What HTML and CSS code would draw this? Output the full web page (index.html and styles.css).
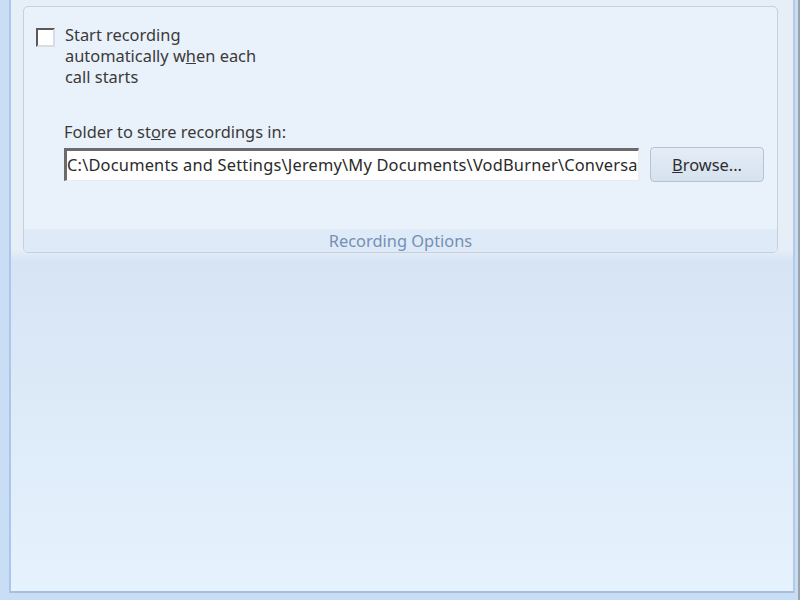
FILE: index.html
```html
<!DOCTYPE html>
<html lang="en">
<head>
  <meta charset="UTF-8" />
  <title>Recording Options</title>
  <link rel="stylesheet" href="styles.css">
</head>
<body>
  <div class="window">
    <div class="panel">
      <div class="group">
        <div class="group-body">
          <label class="check-row">
            <span class="checkbox"></span>
            <span class="check-text">Start recording<br>automatically w<u>h</u>en each<br>call starts</span>
          </label>
          <div class="folder">
            <div class="folder-label">Folder to st<u>o</u>re recordings in:</div>
            <div class="folder-row">
              <div class="path-box">C:\Documents and Settings\Jeremy\My Documents\VodBurner\Conversa</div>
              <button class="browse"><u>B</u>rowse...</button>
            </div>
          </div>
        </div>
        <div class="group-footer">Recording Options</div>
      </div>
    </div>
  </div>
</body>
</html>
```

FILE: styles.css
```css
body {
  margin: 0;
  padding: 0;
  font-family: 'Noto Sans', 'Open Sans', sans-serif;
  font-size: 16.4px;
  color: #3a3a3a;
  background: #c9ddf4;
}
.window {
  height: 600px;
  box-sizing: border-box;
  padding: 0 3px 7px 9px;
  border-right: 2px solid #9aa4ae;
  display: flex;
}
.panel {
  flex: 1;
  border-left: 2px solid #a9c7ea;
  border-right: 2px solid #b4cbe3;
  border-bottom: 2px solid #a6bfdc;
  background: linear-gradient(#e6eef8 0px, #e6eef8 250px, #d6e4f4 262px, #e6f2fd 100%);
  padding: 6px 15px 0 12px;
}
.group {
  border: 1px solid #c5d0dc;
  border-radius: 5px;
  background: #e9f1fb;
  overflow: hidden;
}
.group-body {
  height: 222px;
  padding: 17px 0 0 12px;
  box-sizing: border-box;
}
.check-row {
  display: flex;
  gap: 10px;
  line-height: 21px;
}
.checkbox {
  width: 15px;
  height: 15px;
  margin-top: 4px;
  background: #fff;
  border-top: 2px solid #5a5a5a;
  border-left: 2px solid #5a5a5a;
  border-right: 2px solid #d8dde2;
  border-bottom: 2px solid #d8dde2;
}
.folder {
  margin: 34px 0 0 28px;
}
.folder-label {
  line-height: 21px;
  margin-bottom: 5px;
}
.folder-row {
  display: flex;
  gap: 11px;
  align-items: center;
}
.path-box {
  width: 575px;
  height: 33px;
  box-sizing: border-box;
  background: #fff;
  border-top: 3px solid #6b6b6b;
  border-left: 3px solid #6b6b6b;
  border-right: 1px solid #e8ecf0;
  border-bottom: 1px solid #e8ecf0;
  white-space: nowrap;
  overflow: hidden;
  line-height: 28px;
  letter-spacing: 0.2px;
  color: #2a2a2a;
}
.browse {
  width: 114px;
  height: 35px;
  font: inherit;
  color: #2e2e2e;
  border: 1px solid #b5c4d4;
  border-radius: 4px;
  background: linear-gradient(#e4edf7, #d6e2ef);
}
.group-footer {
  height: 22px;
  line-height: 22px;
  text-align: center;
  color: #7590b4;
  background: #deeaf7;
  border-top: 1px solid #e4eef8;
}
```
